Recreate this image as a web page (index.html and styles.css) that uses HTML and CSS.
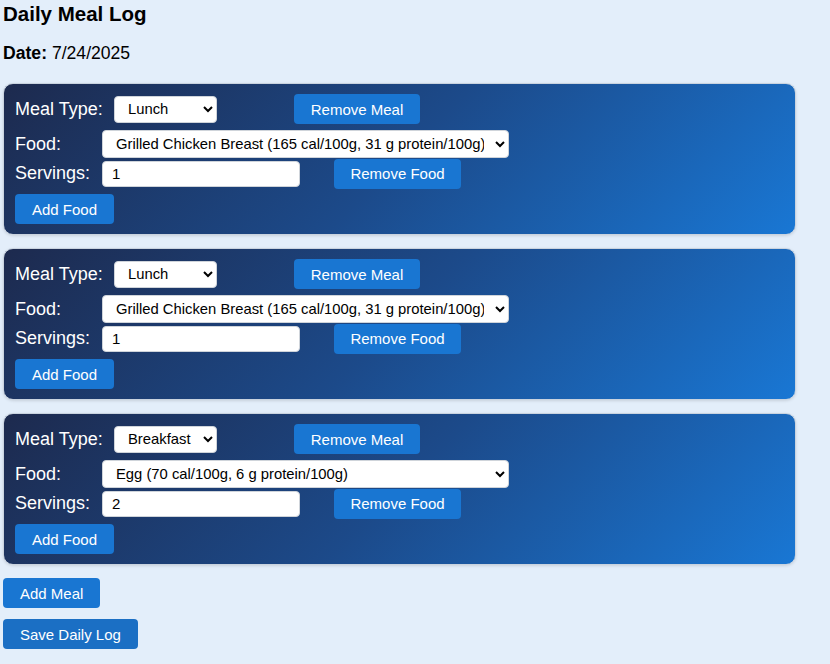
FILE: index.html
```html
<!DOCTYPE html>
<html>
<head>
<meta charset="utf-8">
<title>Daily Meal Log</title>
<link rel="stylesheet" href="styles.css">
</head>
<body>
<div class="page">
  <h1 class="title">Daily Meal Log</h1>
  <p class="date"><strong>Date:</strong> 7/24/2025</p>

  <div class="meals">
    <div class="meal">
      <div class="row meal-head">
        <label class="lbl lbl-meal">Meal Type:</label>
        <select class="sel sel-meal"><option>Lunch</option></select>
        <button class="btn btn-remove-meal">Remove Meal</button>
      </div>
      <div class="row food-row">
        <label class="lbl lbl-food">Food:</label>
        <select class="sel sel-food"><option>Grilled Chicken Breast (165 cal/100g, 31 g protein/100g)</option></select>
      </div>
      <div class="row serv-row">
        <label class="lbl lbl-food">Servings:</label>
        <input class="inp" type="text" value="1">
        <button class="btn btn-remove-food">Remove Food</button>
      </div>
      <div class="row add-row">
        <button class="btn">Add Food</button>
      </div>
    </div>

    <div class="meal">
      <div class="row meal-head">
        <label class="lbl lbl-meal">Meal Type:</label>
        <select class="sel sel-meal"><option>Lunch</option></select>
        <button class="btn btn-remove-meal">Remove Meal</button>
      </div>
      <div class="row food-row">
        <label class="lbl lbl-food">Food:</label>
        <select class="sel sel-food"><option>Grilled Chicken Breast (165 cal/100g, 31 g protein/100g)</option></select>
      </div>
      <div class="row serv-row">
        <label class="lbl lbl-food">Servings:</label>
        <input class="inp" type="text" value="1">
        <button class="btn btn-remove-food">Remove Food</button>
      </div>
      <div class="row add-row">
        <button class="btn">Add Food</button>
      </div>
    </div>

    <div class="meal">
      <div class="row meal-head">
        <label class="lbl lbl-meal">Meal Type:</label>
        <select class="sel sel-meal"><option>Breakfast</option></select>
        <button class="btn btn-remove-meal">Remove Meal</button>
      </div>
      <div class="row food-row">
        <label class="lbl lbl-food">Food:</label>
        <select class="sel sel-food"><option>Egg (70 cal/100g, 6 g protein/100g)</option></select>
      </div>
      <div class="row serv-row">
        <label class="lbl lbl-food">Servings:</label>
        <input class="inp" type="text" value="2">
        <button class="btn btn-remove-food">Remove Food</button>
      </div>
      <div class="row add-row">
        <button class="btn">Add Food</button>
      </div>
    </div>
  </div>

  <div class="actions">
    <button class="btn btn-page">Add Meal</button>
    <button class="btn btn-page btn-save">Save Daily Log</button>
  </div>
</div>
</body>
</html>
```

FILE: styles.css
```css
html, body {
  margin: 0;
  padding: 0;
  background: #e3eefa;
}

body {
  font-family: "Liberation Sans", Arial, sans-serif;
  color: #000;
}

.page {
  padding: 0 3px;
  width: 793px;
}

.title {
  margin: 2px 0 0;
  font-size: 20.5px;
  line-height: 23px;
  font-weight: bold;
}

.date {
  margin: 18px 0 20px;
  font-size: 17.6px;
  line-height: 20px;
}

.meals {
  display: flex;
  flex-direction: column;
  gap: 13px;
}

.meal {
  box-sizing: border-box;
  height: 152px;
  padding: 10px 11px 10px;
  border: 1px solid #c9d3df;
  border-radius: 10px;
  background: linear-gradient(135deg, #1d2a4e 0%, #1c4a8a 50%, #1977d4 100%);
  box-shadow: 0 1px 3px rgba(0, 0, 0, 0.12);
  color: #fff;
}

.row {
  display: flex;
  align-items: center;
}

.meal-head { height: 30px; }
.food-row { height: 28px; margin-top: 6px; }
.serv-row { height: 29px; margin-top: 1px; }
.add-row { height: 30px; margin-top: 6px; }

.lbl {
  font-size: 18px;
  line-height: 21px;
  white-space: nowrap;
  flex: none;
}

.lbl-meal { width: 99px; }
.lbl-food { width: 87px; }

.sel {
  box-sizing: border-box;
  height: 27px;
  padding: 0 8px 0 9px;
  border: 1px solid #cfd4da;
  border-radius: 4px;
  background: #fff;
  color: #000;
  font-family: "Liberation Sans", Arial, sans-serif;
  font-size: 14.8px;
}

.sel-meal { width: 103px; }
.sel-food { width: 407px; height: 28px; }

.inp {
  box-sizing: border-box;
  width: 198px;
  height: 26px;
  padding: 0 9px;
  border: 1px solid #cfd4da;
  border-radius: 4px;
  background: #fff;
  color: #000;
  font-family: "Liberation Sans", Arial, sans-serif;
  font-size: 15px;
}

.btn {
  box-sizing: border-box;
  height: 30px;
  padding: 0 17px;
  border: none;
  border-radius: 4px;
  background: #1976d2;
  color: #fff;
  font-family: "Liberation Sans", Arial, sans-serif;
  font-size: 15px;
  cursor: pointer;
}

.btn-remove-meal { margin-left: 77px; width: 126px; padding: 0; }
.btn-remove-food { margin-left: 34px; width: 127px; padding: 0; }

.actions {
  margin-top: 13px;
  display: flex;
  flex-direction: column;
  align-items: flex-start;
  gap: 11px;
}

.btn-page { padding: 0 17px; }
.btn-save { background: #1b6fc4; }
```
